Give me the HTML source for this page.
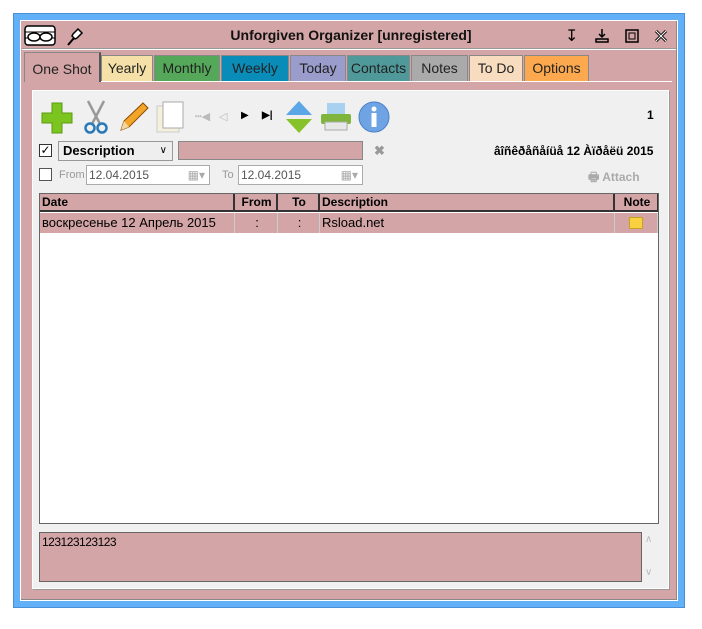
<!DOCTYPE html>
<html><head><meta charset="utf-8"><style>
*{box-sizing:border-box;margin:0;padding:0}
body{width:702px;height:629px;background:#fff;position:relative;font-family:"Liberation Sans",sans-serif;font-size:12px;overflow:hidden}
.abs{position:absolute}
#blue{left:13px;top:13px;width:672px;height:595px;background:#62b0f7;border:1px solid #4a90d8}
#win{left:20px;top:20px;width:658px;height:581px;background:#d3a5a6;border:1px solid #fff;box-shadow:inset -1px -1px 0 #888}
.title{left:0;width:702px;top:27px;text-align:center;font-weight:bold;font-size:14px;color:#111}
.tab{top:55px;height:26px;border:1px solid #888;border-bottom:none;font-size:14px;line-height:24px;text-align:center;color:#222}
#panel{left:32px;top:90px;width:637px;height:499px;background:#f0f0f0;border:1px solid #fff;box-shadow:1px 1px 0 #999}
#tbl{left:39px;top:193px;width:620px;height:331px;background:#fff;border:1px solid #666}
.hd{top:0;height:18px;background:#d3a5a6;border-right:2px solid #333;border-bottom:2px solid #333;font-weight:bold;line-height:17px;padding-left:2px}
.cell{top:19px;height:20px;background:#d3a5a6;border-right:1px solid #ccc;line-height:20px;padding-left:2px;font-size:13px}
input{font-family:inherit}
.box{border:1px solid #aaa;background:#fff;color:#555;height:20px;line-height:18px;padding-left:2px;font-size:12px}
</style></head><body>
<div id="blue" class="abs"></div>
<div id="win" class="abs"></div>
<div class="abs" style="left:22px;top:48px;width:654px;height:2px;border-top:1px solid #999;border-bottom:1px solid #fff"></div>
<svg class="abs" style="left:24px;top:25px" width="34" height="22" viewBox="0 0 34 22"><rect x="1" y="1" width="30" height="19" rx="3" fill="#fff" stroke="#000" stroke-width="1.5"/><path d="M1 7H31M1 13H31" stroke="#000"/><ellipse cx="10" cy="12" rx="6" ry="4" fill="#fff" stroke="#000" stroke-width="1.5"/><ellipse cx="22" cy="12" rx="6" ry="4" fill="#fff" stroke="#000" stroke-width="1.5"/></svg>
<svg class="abs" style="left:66px;top:27px" width="18" height="20" viewBox="0 0 18 20"><path d="M2 18L8 11" stroke="#000" stroke-width="2"/><path d="M7 7L12 2L16 6L11 11L9 12L6 9Z" fill="#fff" stroke="#000" stroke-width="1.5"/></svg>
<div class="abs title">Unforgiven Organizer [unregistered]</div>
<div class="abs" style="left:565px;top:26px;font-size:16px">&#8615;</div>
<svg class="abs" style="left:594px;top:28px" width="16" height="16"><path d="M8 1V9M5 6L8 9L11 6M2 11H14V14H2Z" fill="none" stroke="#000" stroke-width="1.5"/></svg>
<svg class="abs" style="left:625px;top:29px" width="14" height="14"><rect x="1" y="1" width="12" height="12" fill="none" stroke="#000" stroke-width="1.5"/><rect x="4" y="4" width="6" height="6" fill="none" stroke="#000"/></svg>
<svg class="abs" style="left:654px;top:29px" width="14" height="14"><path d="M2 2L12 12M12 2L2 12" stroke="#000" stroke-width="3"/><path d="M2 2L12 12M12 2L2 12" stroke="#fff" stroke-width="1"/></svg>
<div class="abs tab" style="left:24px;top:52px;width:77px;height:30px;background:#d3a5a6;line-height:32px;z-index:2;border-right:2px solid #555">One Shot</div>
<div class="abs tab" style="left:101px;width:52px;background:#f5e1a8">Yearly</div>
<div class="abs tab" style="left:154px;width:66px;background:#55a85a">Monthly</div>
<div class="abs tab" style="left:221px;width:68px;background:#0a8cb8">Weekly</div>
<div class="abs tab" style="left:290px;width:56px;background:#9a9ccc">Today</div>
<div class="abs tab" style="left:347px;width:63px;background:#50999a">Contacts</div>
<div class="abs tab" style="left:411px;width:57px;background:#aaa">Notes</div>
<div class="abs tab" style="left:469px;width:54px;background:#f8dcc0">To Do</div>
<div class="abs tab" style="left:524px;width:65px;background:#fca84e">Options</div>
<div class="abs" style="left:24px;top:81px;width:648px;height:1px;background:#fff"></div>
<div id="panel" class="abs"></div>
<svg class="abs" style="left:41px;top:102px" width="32" height="32"><path d="M11 1H21V11H31V21H21V31H11V21H1V11H11Z" fill="#7cc520" stroke="#5a9a10"/></svg>
<svg class="abs" style="left:82px;top:100px" width="28" height="34"><path d="M6 1L18 24M22 1L10 24" stroke="#999" stroke-width="2.5"/><circle cx="8" cy="28" r="4.5" fill="none" stroke="#2a7ab8" stroke-width="2.5"/><circle cx="20" cy="28" r="4.5" fill="none" stroke="#2a7ab8" stroke-width="2.5"/></svg>
<svg class="abs" style="left:117px;top:100px" width="34" height="34"><path d="M4 30L7 21L26 3L31 8L12 27Z" fill="#f3a52a" stroke="#8a4a00"/><path d="M4 30L7 21L12 27Z" fill="#f4d7a0"/></svg>
<svg class="abs" style="left:155px;top:100px" width="34" height="34"><rect x="2" y="6" width="22" height="26" fill="#f4f0dc" stroke="#ccc"/><rect x="8" y="2" width="20" height="26" fill="#fff" stroke="#aaa"/></svg>
<div class="abs" style="left:195px;top:110px;color:#bbb;font-size:11px">&#9477;&#9664;</div>
<div class="abs" style="left:219px;top:110px;color:#bbb;font-size:11px">&#9665;</div>
<div class="abs" style="left:241px;top:110px;font-size:10px">&#9654;</div>
<div class="abs" style="left:262px;top:110px;font-size:10px;font-weight:bold">&#9654;|</div>
<svg class="abs" style="left:284px;top:100px" width="30" height="34"><path d="M15 1L28 15H2Z" fill="#5aa6e6"/><path d="M15 33L28 19H2Z" fill="#86c22a"/></svg>
<svg class="abs" style="left:320px;top:102px" width="32" height="30"><rect x="7" y="1" width="18" height="12" fill="#a8d0ef"/><rect x="1" y="12" width="30" height="10" rx="2" fill="#7eb53a"/><rect x="5" y="20" width="22" height="8" fill="#e8e8e8" stroke="#aaa"/></svg>
<svg class="abs" style="left:356px;top:100px" width="36" height="34"><circle cx="18" cy="17" r="15" fill="#6ea4e4" stroke="#4a80c8"/><circle cx="18" cy="9" r="2.5" fill="#fff"/><rect x="15.5" y="13" width="5" height="14" fill="#fff"/></svg>
<div class="abs" style="left:647px;top:108px;font-weight:bold">1</div>
<div class="abs" style="left:39px;top:144px;width:13px;height:13px;border:1px solid #333;background:#fff;font-size:12px;line-height:11px;text-align:center">&#10003;</div>
<div class="abs" style="left:58px;top:141px;width:115px;height:20px;border:1px solid #999;background:#eee;font-weight:bold;font-size:13px;line-height:18px;padding-left:4px">Description<span style="position:absolute;right:5px;font-weight:normal;font-size:10px">&#8744;</span></div>
<div class="abs" style="left:178px;top:141px;width:185px;height:19px;background:#d3a5a6;border:1px solid #888"></div>
<div class="abs" style="left:374px;top:143px;color:#999;font-weight:bold;font-size:13px">&#10006;</div>
<div class="abs" style="left:494px;top:144px;font-weight:bold">âîñêðåñåíüå 12 Àïðåëü 2015</div>
<div class="abs" style="left:39px;top:168px;width:13px;height:13px;border:1px solid #555;background:#fff"></div>
<div class="abs" style="left:59px;top:169px;color:#999;font-size:11px">From</div>
<div class="abs box" style="left:86px;top:165px;width:124px">12.04.2015<span style="position:absolute;right:4px;color:#aaa">&#9638;&#9662;</span></div>
<div class="abs" style="left:222px;top:169px;color:#999;font-size:11px">To</div>
<div class="abs box" style="left:238px;top:165px;width:125px">12.04.2015<span style="position:absolute;right:4px;color:#aaa">&#9638;&#9662;</span></div>
<div class="abs" style="left:588px;top:168px;color:#aaa;font-weight:bold">&#128438; Attach</div>
<div id="tbl" class="abs">
<div class="abs hd" style="left:0;width:195px">Date</div>
<div class="abs hd" style="left:195px;width:43px;text-align:center">From</div>
<div class="abs hd" style="left:238px;width:42px;text-align:center">To</div>
<div class="abs hd" style="left:280px;width:295px">Description</div>
<div class="abs hd" style="left:575px;width:43px;text-align:center;border-right:1px solid #333">Note</div>
<div class="abs cell" style="left:0;width:195px">воскресенье 12 Апрель 2015</div>
<div class="abs cell" style="left:195px;width:43px;text-align:center">:</div>
<div class="abs cell" style="left:238px;width:42px;text-align:center">:</div>
<div class="abs cell" style="left:280px;width:295px">Rsload.net</div>
<div class="abs cell" style="left:575px;width:43px"><div class="abs" style="left:14px;top:4px;width:14px;height:12px;background:#f8d040;border:1px solid #c9a020"></div></div>
</div>
<div class="abs" style="left:39px;top:532px;width:603px;height:50px;background:#d3a5a6;border:1px solid #666;padding:2px 2px;font-size:12px;letter-spacing:-0.5px">123123123123</div>
<div class="abs" style="left:645px;top:534px;color:#bbb;font-size:10px">&#8743;</div>
<div class="abs" style="left:645px;top:567px;color:#bbb;font-size:10px">&#8744;</div>
</body></html>
